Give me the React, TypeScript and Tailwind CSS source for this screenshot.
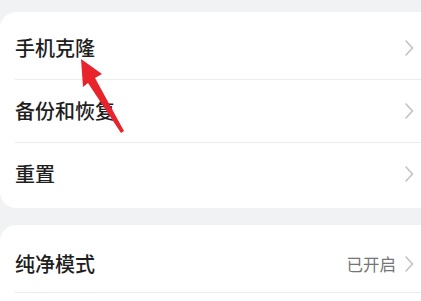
import React from "react";

const Chevron = () => (
  <svg width="10" height="18" viewBox="0 0 10 18" className="shrink-0">
    <path d="M2 2 L8.5 9 L2 16" fill="none" stroke="#c2c2c2" strokeWidth="1.6" strokeLinecap="round" strokeLinejoin="round" />
  </svg>
);

const Row = ({ label, value, h }: { label: string; value?: string; h: string }) => (
  <div className={`flex items-center pl-[15px] pr-[7px] w-[421px] ${h}`}>
    <span className="flex-1 text-[20px] leading-none font-medium text-[#1e1e1e]">{label}</span>
    {value && <span className="text-[16.5px] leading-none text-[#757575] mr-[8px]">{value}</span>}
    <Chevron />
  </div>
);

const Divider = () => <div className="ml-[15px] h-px bg-[#ececec]" />;

export default function App() {
  return (
    <div
      className="relative w-[421px] h-[301px] overflow-hidden bg-[#f1f2f4] pt-[12px]"
      style={{ fontFamily: '"Noto Sans CJK SC", "Noto Sans", sans-serif' }}
    >
      <div className="w-[460px] bg-white rounded-[16px] pt-[5px] pb-[3px]">
        <Row label="手机克隆" h="h-[62px]" />
        <Divider />
        <Row label="备份和恢复" h="h-[62px]" />
        <Divider />
        <Row label="重置" h="h-[62px]" />
      </div>
      <div className="mt-[17px] w-[460px] bg-white rounded-[16px] pt-[11px] h-[120px]">
        <Row label="纯净模式" value="已开启" h="h-[56px]" />
        <Divider />
      </div>
      <svg className="absolute left-0 top-0" width="421" height="301" viewBox="0 0 421 301">
        <polygon
          points="81,59 102,74 95,78 124,131 121,133 88,83 83,87"
          fill="#e8232b"
        />
      </svg>
    </div>
  );
}
